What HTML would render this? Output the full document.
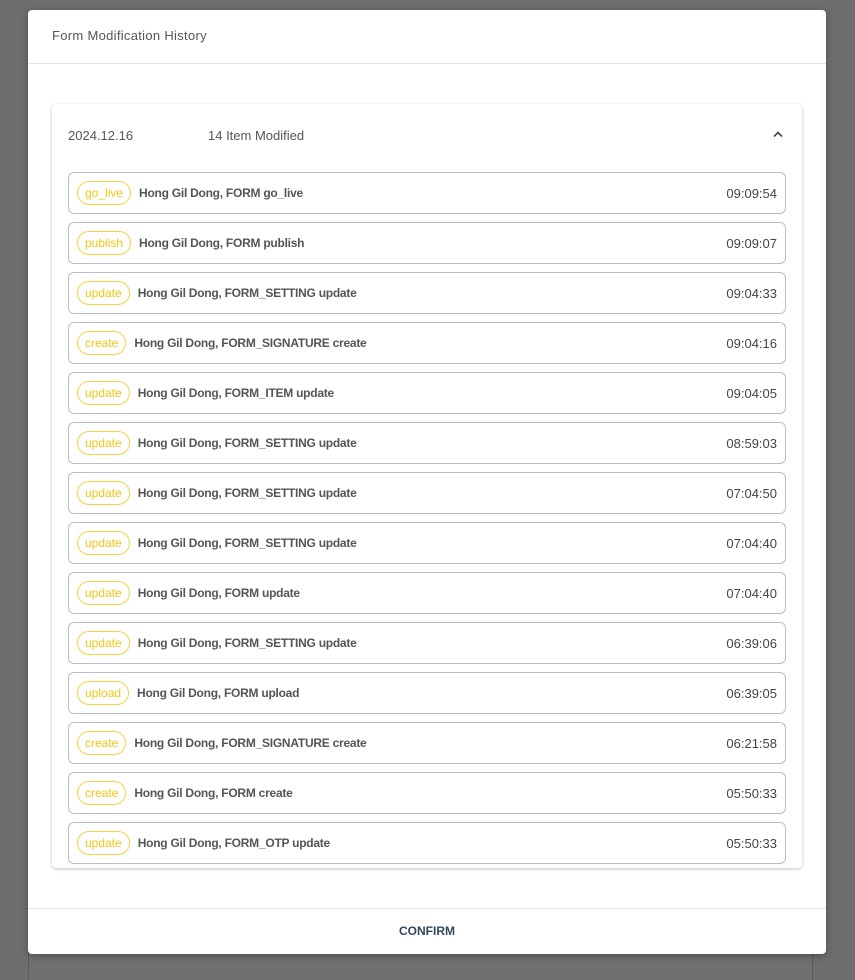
<!DOCTYPE html>
<html><head><style>
*{box-sizing:border-box;margin:0;padding:0}
html,body{width:855px;height:980px;overflow:hidden}
body{background:#6e6e6e;font-family:"Liberation Sans",sans-serif;position:relative}
.under{position:absolute;left:28px;top:940px;width:785px;height:40px;background:#707070;border-left:1px solid #5a5a5a;border-right:1px solid #5a5a5a}
.dlg{position:absolute;left:28px;top:10px;width:798px;height:944px;background:#fff;border-radius:4px;box-shadow:0 2px 8px rgba(0,0,0,.3)}
.hd{height:54px;border-bottom:1px solid #e2e2e2;padding:18px 24px;font-size:13px;color:#555;letter-spacing:.3px}
.card{position:absolute;left:24px;top:94px;width:750px;height:764px;border-radius:4px;box-shadow:0 1px 3px rgba(0,0,0,.25)}
.ch{position:absolute;top:24px;left:16px;font-size:13px;color:#555}
.ch2{position:absolute;top:24px;left:156px;font-size:13px;color:#555}
.chev{position:absolute;right:18px;top:26px}
.row{position:absolute;left:16px;width:718px;height:42px;border:1px solid #bdbdbd;border-radius:6px;display:flex;align-items:center;padding:0 8px;font-size:12px;color:#555;font-weight:bold;letter-spacing:-0.25px}
.b{border:1px solid #f7d23e;color:#f3c512;border-radius:12px;height:24px;line-height:22px;padding:0 7px;font-weight:normal;font-size:12px;margin-right:8px;letter-spacing:0}
.t{margin-left:auto;font-weight:normal;font-size:13px;color:#444;letter-spacing:0}
.ft{position:absolute;left:0;right:0;top:898px;border-top:1px solid #e2e2e2;height:46px;text-align:center;line-height:44px;font-size:12px;color:#34465e;font-weight:bold}
</style></head><body>
<div class="under"></div>
<div class="dlg">
<div class="hd">Form Modification History</div>
<div class="card">
<div class="ch">2024.12.16</div><div class="ch2">14 Item Modified</div>
<svg class="chev" width="12" height="8" viewBox="0 0 12 8"><path d="M2 6.5L6 2.5L10 6.5" stroke="#444" stroke-width="1.6" fill="none"/></svg>
<div class="row" style="top:68px"><span class="b">go_live</span>Hong Gil Dong, FORM go_live<span class="t">09:09:54</span></div>
<div class="row" style="top:118px"><span class="b">publish</span>Hong Gil Dong, FORM publish<span class="t">09:09:07</span></div>
<div class="row" style="top:168px"><span class="b">update</span>Hong Gil Dong, FORM_SETTING update<span class="t">09:04:33</span></div>
<div class="row" style="top:218px"><span class="b">create</span>Hong Gil Dong, FORM_SIGNATURE create<span class="t">09:04:16</span></div>
<div class="row" style="top:268px"><span class="b">update</span>Hong Gil Dong, FORM_ITEM update<span class="t">09:04:05</span></div>
<div class="row" style="top:318px"><span class="b">update</span>Hong Gil Dong, FORM_SETTING update<span class="t">08:59:03</span></div>
<div class="row" style="top:368px"><span class="b">update</span>Hong Gil Dong, FORM_SETTING update<span class="t">07:04:50</span></div>
<div class="row" style="top:418px"><span class="b">update</span>Hong Gil Dong, FORM_SETTING update<span class="t">07:04:40</span></div>
<div class="row" style="top:468px"><span class="b">update</span>Hong Gil Dong, FORM update<span class="t">07:04:40</span></div>
<div class="row" style="top:518px"><span class="b">update</span>Hong Gil Dong, FORM_SETTING update<span class="t">06:39:06</span></div>
<div class="row" style="top:568px"><span class="b">upload</span>Hong Gil Dong, FORM upload<span class="t">06:39:05</span></div>
<div class="row" style="top:618px"><span class="b">create</span>Hong Gil Dong, FORM_SIGNATURE create<span class="t">06:21:58</span></div>
<div class="row" style="top:668px"><span class="b">create</span>Hong Gil Dong, FORM create<span class="t">05:50:33</span></div>
<div class="row" style="top:718px"><span class="b">update</span>Hong Gil Dong, FORM_OTP update<span class="t">05:50:33</span></div>
</div>
<div class="ft">CONFIRM</div>
</div>
</body></html>
